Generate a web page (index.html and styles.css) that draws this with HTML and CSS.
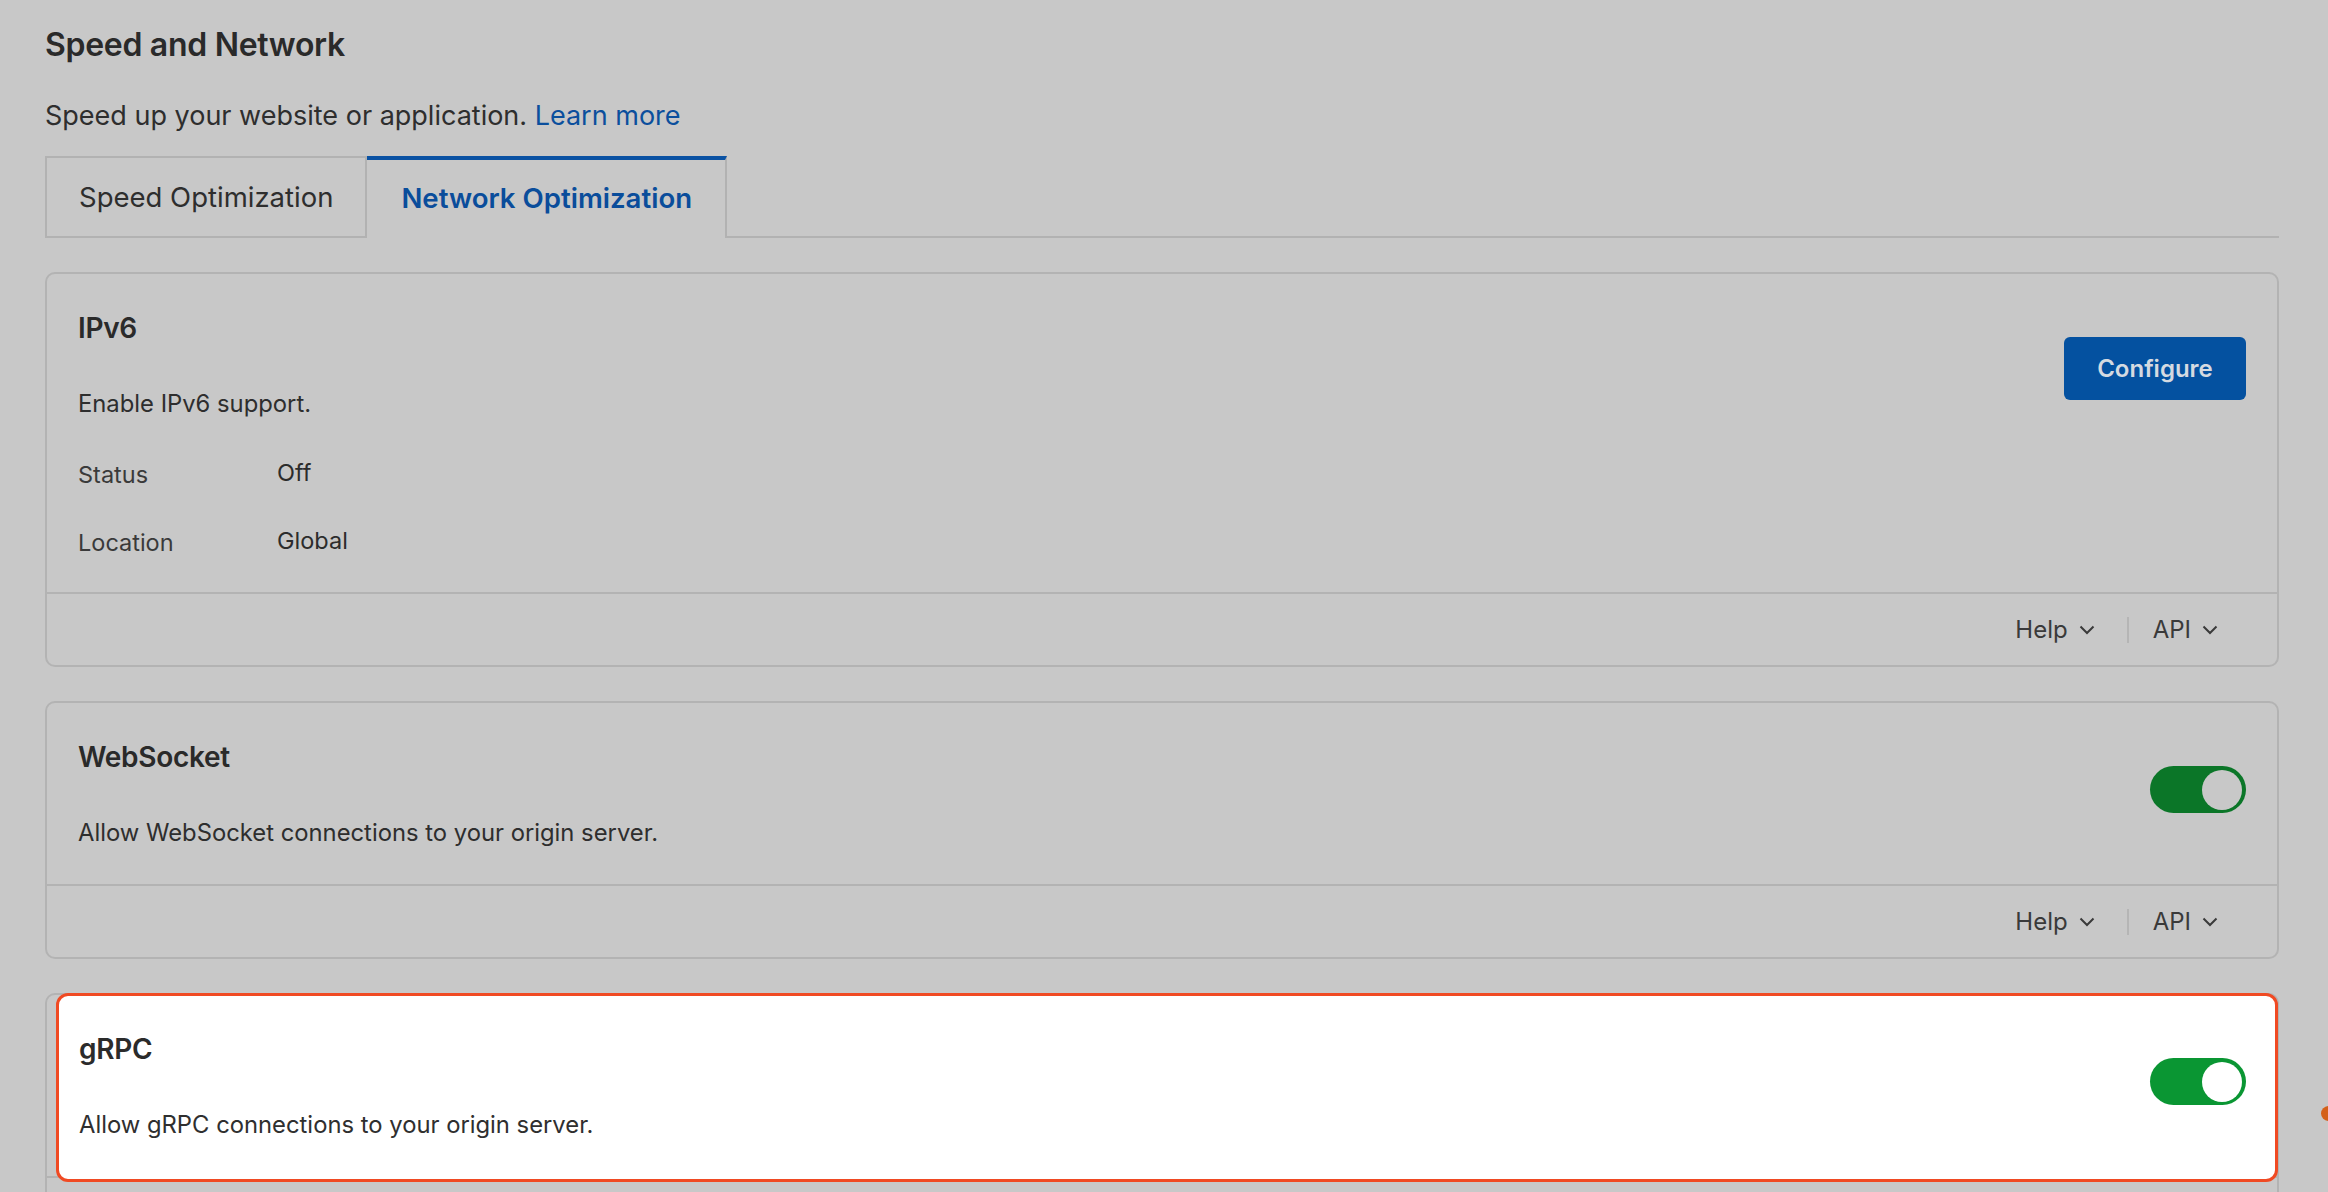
FILE: index.html
```html
<!DOCTYPE html>
<html lang="en">
<head>
  <meta charset="UTF-8" />
  <title>Speed and Network</title>
  <meta name="viewport" content="width=device-width, initial-scale=1.0" />
  <link rel="stylesheet" href="styles.css">
</head>
<body>
  <div class="page">
    <h1>Speed and Network</h1>
    <p class="intro">Speed up your website or application. <a href="#">Learn more</a></p>

    <div class="tabs">
      <a class="tab" href="#">Speed Optimization</a>
      <a class="tab active" href="#">Network Optimization</a>
    </div>

    <!-- IPv6 -->
    <div class="card">
      <div class="card-body">
        <div class="card-info">
          <h3>IPv6</h3>
          <p class="desc">Enable IPv6 support.</p>
          <div class="meta-row"><span class="meta-label">Status</span><span class="meta-value">Off</span></div>
          <div class="meta-row"><span class="meta-label">Location</span><span class="meta-value">Global</span></div>
        </div>
        <button class="btn">Configure</button>
      </div>
      <div class="card-footer">
        <a class="foot-link" href="#">Help
          <svg width="16" height="10" viewBox="0 0 16 10"><path d="M1.5 1.5l6.5 6.5 6.5-6.5" fill="none" stroke="currentColor" stroke-width="2"/></svg>
        </a>
        <span class="foot-sep"></span>
        <a class="foot-link" href="#">API
          <svg width="16" height="10" viewBox="0 0 16 10"><path d="M1.5 1.5l6.5 6.5 6.5-6.5" fill="none" stroke="currentColor" stroke-width="2"/></svg>
        </a>
      </div>
    </div>

    <!-- WebSocket -->
    <div class="card">
      <div class="card-body">
        <div class="card-info">
          <h3>WebSocket</h3>
          <p class="desc">Allow WebSocket connections to your origin server.</p>
        </div>
        <span class="toggle on"><span class="knob"></span></span>
      </div>
      <div class="card-footer">
        <a class="foot-link" href="#">Help
          <svg width="16" height="10" viewBox="0 0 16 10"><path d="M1.5 1.5l6.5 6.5 6.5-6.5" fill="none" stroke="currentColor" stroke-width="2"/></svg>
        </a>
        <span class="foot-sep"></span>
        <a class="foot-link" href="#">API
          <svg width="16" height="10" viewBox="0 0 16 10"><path d="M1.5 1.5l6.5 6.5 6.5-6.5" fill="none" stroke="currentColor" stroke-width="2"/></svg>
        </a>
      </div>
    </div>

    <!-- gRPC (highlighted by the tour) -->
    <div class="card spot">
      <div class="card-body">
        <div class="card-info">
          <h3>gRPC</h3>
          <p class="desc">Allow gRPC connections to your origin server.</p>
        </div>
        <span class="toggle on"><span class="knob"></span></span>
      </div>
      <div class="card-footer"></div>
    </div>
  </div>

  <span class="beacon"></span>
</body>
</html>
```

FILE: styles.css
```css
* {
  margin: 0;
  padding: 0;
  box-sizing: border-box;
  font-family: 'Inter', 'Liberation Sans', sans-serif;
}

body {
  background: #c8c8c8;
  color: #2c2c2c;
  height: 1192px;
  overflow: hidden;
  position: relative;
}

.page {
  padding: 25px 49px 0 45px;
}

h1 {
  font-size: 32px;
  font-weight: 600;
  line-height: 40px;
  color: #2a2a2a;
  letter-spacing: -0.3px;
}

.intro {
  margin-top: 34px;
  font-size: 27px;
  line-height: 34px;
  color: #2e2e2e;
}

.intro a {
  color: #0b4f9d;
  text-decoration: none;
}

/* tabs */
.tabs {
  display: flex;
  margin-top: 23px;
  border-bottom: 2px solid #b2b2b2;
}

.tab {
  display: block;
  padding: 0 32px;
  line-height: 78px;
  font-size: 27.5px;
  color: #2e2e2e;
  text-decoration: none;
  border: 2px solid #b2b2b2;
  border-bottom: none;
}

.tab.active {
  border-left: none;
  border-top: 4px solid #0a52a3;
  line-height: 76px;
  padding: 0 33px 2px 34px;
  font-size: 27.6px;
  color: #0a4d9b;
  font-weight: 600;
  background: #c8c8c8;
  margin-bottom: -2px;
}

/* cards */
.card {
  margin-top: 34px;
  border: 2px solid #b3b3b3;
  border-radius: 10px;
}

.card-body {
  display: flex;
  justify-content: space-between;
  align-items: flex-start;
  padding: 37px 31px 34px 31px;
}

.card h3 {
  font-size: 28px;
  font-weight: 600;
  line-height: 34px;
  color: #2a2a2a;
  letter-spacing: -0.3px;
}

.desc {
  margin-top: 42px;
  font-size: 23.8px;
  line-height: 34px;
  color: #2e2e2e;
}

.meta-row {
  display: flex;
  margin-top: 34.5px;
  font-size: 23.5px;
  line-height: 34px;
}

.meta-label {
  width: 199px;
  color: #3a3a3a;
  position: relative;
  top: 2px;
}

.meta-value {
  color: #2c2c2c;
}

.btn {
  margin-top: 26px;
  width: 182px;
  height: 63px;
  border: none;
  border-radius: 6px;
  background: #0451a0;
  color: #d5dae1;
  font-size: 24px;
  font-weight: 600;
  cursor: pointer;
}

.toggle {
  margin-top: 26px;
  width: 96px;
  height: 47px;
  border-radius: 24px;
  background: #0b7628;
  display: flex;
  align-items: center;
  justify-content: flex-end;
  padding: 0 4px;
  flex-shrink: 0;
}

.toggle .knob {
  width: 40px;
  height: 40px;
  border-radius: 50%;
  background: #c8c8c8;
}

.card-footer {
  display: flex;
  justify-content: flex-end;
  align-items: center;
  height: 73px;
  border-top: 2px solid #b3b3b3;
  padding-right: 59px;
}

.foot-link {
  display: flex;
  align-items: center;
  gap: 11px;
  font-size: 24px;
  color: #3a3a3a;
  text-decoration: none;
}

.foot-sep {
  width: 2px;
  height: 26px;
  background: #b5b5b5;
  margin: 0 24px 0 32px;
}

/* highlighted card */
.spot .card-body {
  position: relative;
  z-index: 1;
  margin: -2px -1px -6px 9px;
  padding: 36px 29px 37px 20px;
  background: #fff;
  border: 3px solid #f04a23;
  border-radius: 12px;
}

.spot h3 {
  color: #2b2b2b;
}

.spot .desc {
  color: #2f2f2f;
}

.spot .toggle {
  background: #0a9633;
}

.spot .toggle .knob {
  background: #fff;
}

.beacon {
  position: absolute;
  left: 2321px;
  top: 1106px;
  width: 15px;
  height: 15px;
  border-radius: 50%;
  background: #d4601a;
}
```
